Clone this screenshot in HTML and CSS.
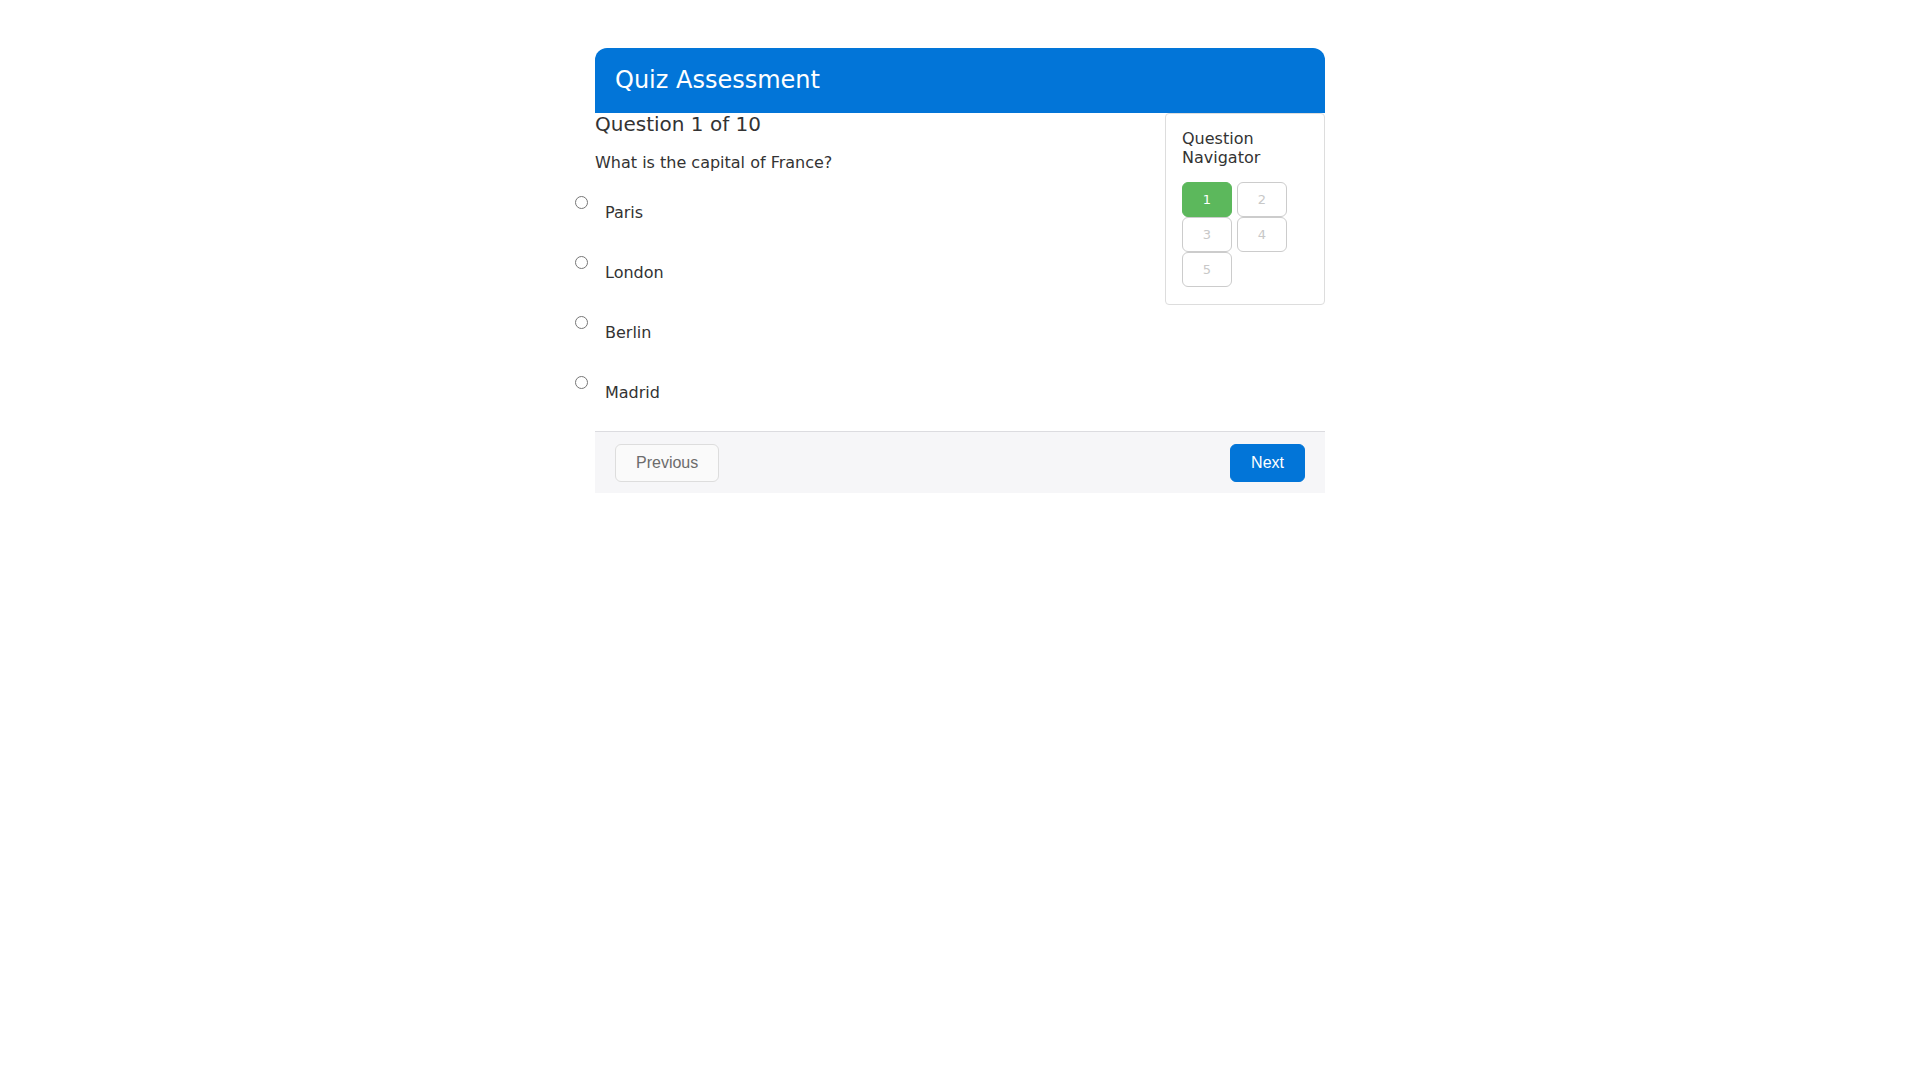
FILE: index.html
```html
<!DOCTYPE html>
<html lang="en">
<head>
<meta charset="utf-8">
<title>Quiz Assessment</title>
<link rel="stylesheet" href="styles.css">
</head>
<body>
<div class="quiz">
  <header class="quiz-header">
    <h1 class="quiz-title">Quiz Assessment</h1>
  </header>
  <div class="quiz-body">
    <section class="question">
      <h2 class="question-count">Question 1 of 10</h2>
      <p class="question-text">What is the capital of France?</p>
      <div class="options">
        <div class="option"><input type="radio" name="answer" id="a1" class="option-input"><label for="a1" class="option-label">Paris</label></div>
        <div class="option"><input type="radio" name="answer" id="a2" class="option-input"><label for="a2" class="option-label">London</label></div>
        <div class="option"><input type="radio" name="answer" id="a3" class="option-input"><label for="a3" class="option-label">Berlin</label></div>
        <div class="option"><input type="radio" name="answer" id="a4" class="option-input"><label for="a4" class="option-label">Madrid</label></div>
      </div>
    </section>
    <aside class="navigator">
      <h3 class="navigator-title">Question Navigator</h3>
      <div class="nav-grid">
        <button class="nav-btn nav-btn-active">1</button>
        <button class="nav-btn">2</button>
        <button class="nav-btn">3</button>
        <button class="nav-btn">4</button>
        <button class="nav-btn">5</button>
      </div>
    </aside>
  </div>
  <footer class="quiz-footer">
    <button class="btn btn-prev">Previous</button>
    <button class="btn btn-next">Next</button>
  </footer>
</div>
</body>
</html>
```

FILE: styles.css
```css
html, body {
  margin: 0;
  padding: 0;
  background: #ffffff;
}

body {
  font-family: "DejaVu Sans", sans-serif;
  color: #333333;
  font-size: 16px;
}

.quiz {
  width: 730px;
  margin: 48px auto 0;
}

.quiz-header {
  background: #0275d8;
  border-radius: 12px 12px 0 0;
  padding: 18px 20px 19px;
}

.quiz-title {
  margin: 0;
  font-size: 24px;
  font-weight: normal;
  color: #ffffff;
  line-height: 28px;
}

.quiz-body {
  display: flex;
  align-items: flex-start;
}

.question {
  flex: 1;
  min-width: 0;
}

.question-count {
  margin: 0;
  font-size: 20px;
  font-weight: normal;
  line-height: 22px;
  color: #333333;
}

.question-text {
  margin: 16px 0 0;
  line-height: 24px;
}

.options {
  display: flex;
  flex-direction: column;
  gap: 31px;
  margin: 21px 0 26px;
}

.option {
  display: flex;
  align-items: flex-start;
  margin-left: -20px;
}

.option-input {
  margin: 0;
  width: 13px;
  height: 13px;
  flex: none;
}

.option-label {
  margin: 5px 0 0 17px;
  line-height: 24px;
  color: #333333;
}

.navigator {
  width: 160px;
  box-sizing: border-box;
  border: 1px solid #dddddd;
  border-radius: 4px;
  padding: 15px 16px 17px;
  flex: none;
}

.navigator-title {
  margin: 0 0 15px;
  font-size: 16px;
  font-weight: normal;
  line-height: normal;
  color: #333333;
}

.nav-grid {
  display: flex;
  flex-wrap: wrap;
  column-gap: 5px;
}

.nav-btn {
  width: 50px;
  height: 35px;
  box-sizing: border-box;
  border: 1px solid #cccccc;
  border-radius: 6px;
  background: #ffffff;
  color: #c8c8c8;
  font-family: "DejaVu Sans", sans-serif;
  font-size: 13px;
  padding: 0;
}

.nav-btn-active {
  background: #5cb85c;
  border-color: #5cb85c;
  color: #ffffff;
}

.quiz-footer {
  display: flex;
  justify-content: space-between;
  align-items: center;
  background: #f6f6f8;
  border-top: 1px solid #dcdce0;
  padding: 12px 20px 11px;
}

.btn {
  font-family: "Liberation Sans", Arial, sans-serif;
  font-size: 16px;
  line-height: normal;
  padding: 9px 20px;
  border-radius: 6px;
  border: 1px solid #dddddd;
}

.btn-prev {
  background: #fafafa;
  color: #6c6c6c;
}

.btn-next {
  background: #0275d8;
  border-color: #0275d8;
  color: #ffffff;
}
```
